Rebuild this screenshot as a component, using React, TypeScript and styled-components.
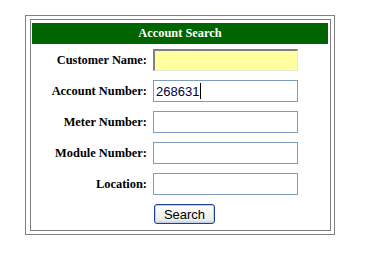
import React from 'react';
import styled, { createGlobalStyle } from 'styled-components';

const GlobalStyle = createGlobalStyle`
  body {
    margin: 0;
    background: #ffffff;
    font-family: 'Liberation Serif', 'Times New Roman', serif;
  }
`;

type Field = {
  label: string;
  value?: string;
  focused?: boolean;
  highlight?: boolean;
};

const FIELDS: Field[] = [
  { label: 'Customer Name:', highlight: true },
  { label: 'Account Number:', value: '268631', focused: true },
  { label: 'Meter Number:' },
  { label: 'Module Number:' },
  { label: 'Location:' },
];

const App: React.FC = () => {
  return (
    <Page>
      <GlobalStyle />
      <OuterBox>
        <InnerBox>
          <Header>Account Search</Header>
          <Form>
            {FIELDS.map((f) => (
              <React.Fragment key={f.label}>
                <Label>{f.label}</Label>
                <InputWrap>
                  <TextInput highlight={!!f.highlight}>
                    {f.value}
                    {f.focused && <Caret />}
                  </TextInput>
                </InputWrap>
              </React.Fragment>
            ))}
            <span />
            <ButtonCell>
              <SearchButton>Search</SearchButton>
            </ButtonCell>
          </Form>
        </InnerBox>
      </OuterBox>
    </Page>
  );
};

export default App;

const Page = styled.div`
  padding: 15px 0 0 25px;
`;

const OuterBox = styled.div`
  width: 310px;
  box-sizing: border-box;
  border: 1px solid #808080;
  padding: 3px 3px 3px 4px;
`;

const InnerBox = styled.div`
  border: 1px solid #808080;
  padding: 3px 2px 6px 1px;
`;

const Header = styled.div`
  background: #006400;
  color: #ffffff;
  font-weight: 700;
  font-size: 12.4px;
  height: 21px;
  line-height: 21px;
  text-align: center;
`;

const Form = styled.div`
  display: grid;
  grid-template-columns: 115px 1fr;
  column-gap: 6px;
  row-gap: 9px;
  margin-top: 5px;
  align-items: center;
`;

const Label = styled.div`
  text-align: right;
  font-weight: 700;
  font-size: 12.4px;
  color: #000000;
`;

const InputWrap = styled.div`
  display: flex;
`;

const TextInput = styled.div<{ highlight: boolean }>`
  width: 145px;
  height: 22px;
  box-sizing: border-box;
  display: flex;
  align-items: center;
  padding-left: 2px;
  font-family: 'Liberation Sans', Arial, sans-serif;
  font-size: 13px;
  color: #000040;
  background: ${(p) => (p.highlight ? '#ffffa0' : '#ffffff')};
  border: 1px solid #7f9db9;
  ${(p) =>
    p.highlight &&
    `
    border-top: 2px solid #808080;
    border-left: 2px solid #808080;
    border-right: 1px solid #e8e8d8;
    border-bottom: 1px solid #e8e8d8;
  `}
`;

const Caret = styled.span`
  display: inline-block;
  width: 1px;
  height: 16px;
  background: #000000;
  margin-left: 1px;
`;

const ButtonCell = styled.div`
  padding-left: 1px;
`;

const SearchButton = styled.button`
  width: 61px;
  height: 20px;
  padding: 0;
  font-family: 'Liberation Sans', Arial, sans-serif;
  font-size: 13px;
  color: #000000;
  border: 1px solid #1c3f94;
  border-radius: 3px;
  background: linear-gradient(#ffffff, #ecebe6 85%, #d6d0c5);
  box-shadow: inset 0 0 0 1px #c0d0f0;
`;
